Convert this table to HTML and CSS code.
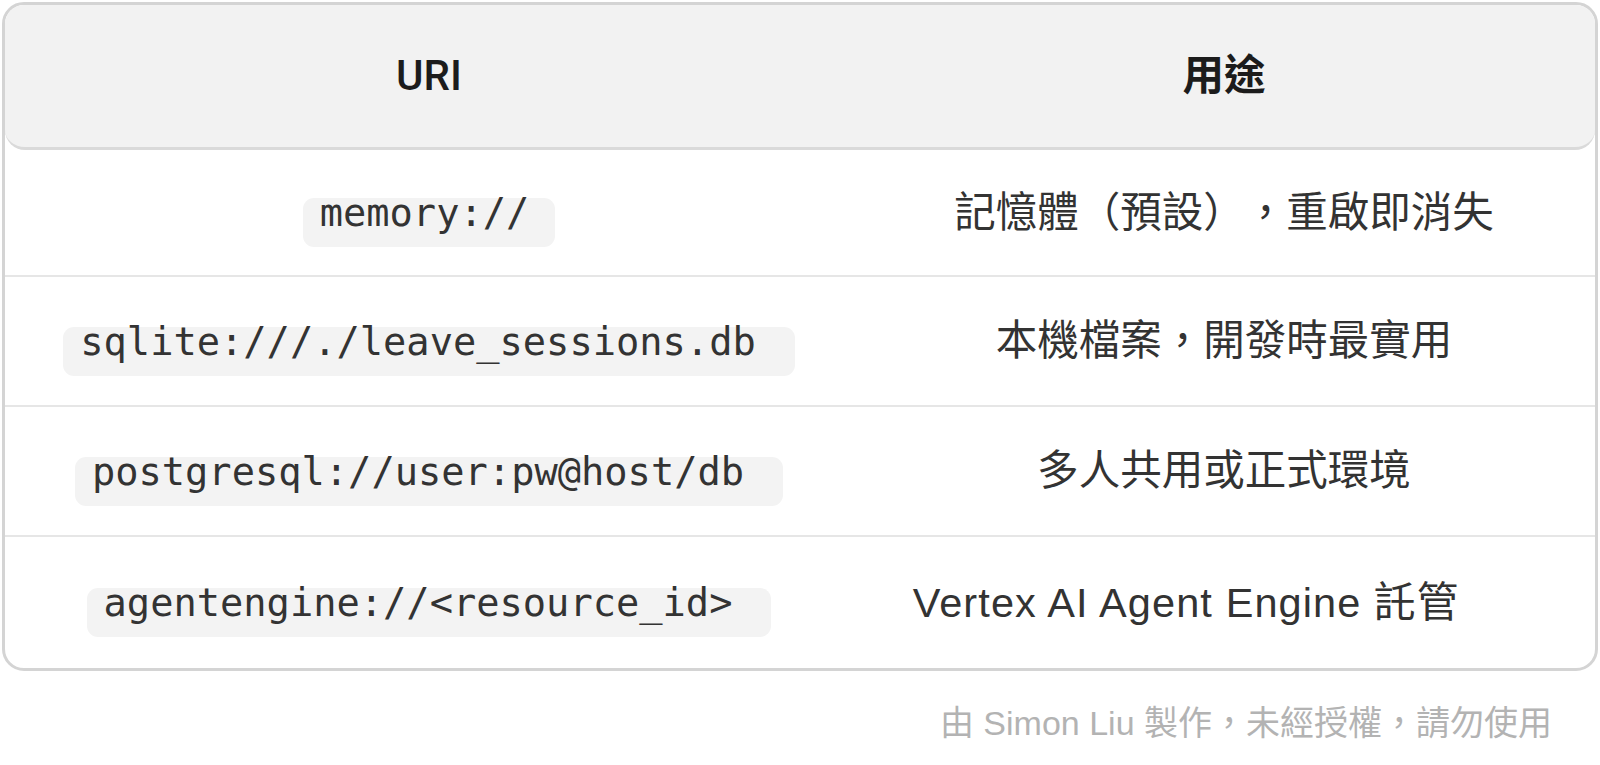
FILE: index.html
```html
<!DOCTYPE html>
<html lang="zh-Hant">
<head>
<meta charset="utf-8">
<title>Session URI</title>
<link rel="stylesheet" href="styles.css">
</head>
<body>
<div class="page">
  <div class="table">
    <div class="head">
      <div class="cell"><span class="th th-latin">URI</span></div>
      <div class="cell"><span class="th">用途</span></div>
    </div>
    <div class="row first">
      <div class="cell"><code class="code short">memory://</code></div>
      <div class="cell"><span class="desc">記憶體（預設），重啟即消失</span></div>
    </div>
    <div class="row">
      <div class="cell"><code class="code">sqlite:///./leave_sessions.db</code></div>
      <div class="cell"><span class="desc">本機檔案，開發時最實用</span></div>
    </div>
    <div class="row">
      <div class="cell"><code class="code">postgresql://user:pw@host/db</code></div>
      <div class="cell"><span class="desc">多人共用或正式環境</span></div>
    </div>
    <div class="row last">
      <div class="cell"><code class="code">agentengine://&lt;resource_id&gt;</code></div>
      <div class="cell"><span class="desc latin">Vertex AI Agent Engine 託管</span></div>
    </div>
  </div>
  <div class="footer">由 Simon Liu 製作，未經授權，請勿使用</div>
</div>
</body>
</html>
```

FILE: styles.css
```css
* { box-sizing: border-box; }

html, body {
  margin: 0;
  padding: 0;
  background: #ffffff;
}

body {
  font-family: "Liberation Sans", "Noto Sans CJK TC", sans-serif;
  color: #333333;
  text-spacing-trim: space-all;
}

.page {
  padding: 2px 2px 0 2px;
}

.table {
  width: 1596px;
  border: 3px solid #d4d4d4;
  border-radius: 22px;
  overflow: hidden;
  background: #ffffff;
}

.head {
  display: grid;
  grid-template-columns: 848px 1fr;
  height: 145px;
  background: #f2f2f2;
  border-bottom: 3px solid #dadada;
  border-radius: 0 0 20px 20px;
}

.row {
  display: grid;
  grid-template-columns: 848px 1fr;
  height: 130px;
  border-bottom: 2px solid #e6e6e6;
}

.row.first {
  height: 127px;
}

.row.last {
  height: 131px;
  border-bottom: none;
}

.cell {
  display: flex;
  align-items: center;
  justify-content: center;
}

.th {
  font-size: 41.5px;
  font-weight: 700;
  color: #1c1c1c;
  line-height: 50px;
}

.th-latin {
  font-family: "Roboto", "Liberation Sans", sans-serif;
  font-weight: 500;
  font-size: 42px;
}

.desc {
  font-size: 41.5px;
  line-height: 50px;
  color: #333333;
}

.desc.latin {
  letter-spacing: 1.1px;
  margin-right: 76px;
}

.code {
  display: inline-block;
  font-family: "DejaVu Sans Mono", "Liberation Mono", monospace;
  font-size: 38.7px;
  line-height: 29px;
  height: 49px;
  padding: 0 39px 20px 17px;
  margin-top: 20px;
  background: #f3f3f3;
  border-radius: 11px;
  color: #333333;
  white-space: pre;
}

.code.short {
  padding-right: 26px;
}

.footer {
  margin-top: 32px;
  padding-right: 46px;
  text-align: right;
  font-size: 34px;
  line-height: 40px;
  color: #b3b3b3;
}
```
